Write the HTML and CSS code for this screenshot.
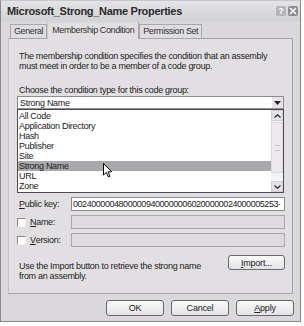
FILE: index.html
```html
<!DOCTYPE html>
<html lang="en">
<head>
    <meta charset="UTF-8">
    <title>Microsoft_Strong_Name Properties</title>
    <link rel="stylesheet" href="styles.css">
</head>
<body>
    <div class="window">
        <div class="titlebar">
            <span class="title">Microsoft_Strong_Name Properties</span>
            <div class="caption-btns">
                <span class="cap-btn">?</span>
                <span class="cap-btn close">
                    <svg width="8" height="8" viewBox="0 0 8 8"><path d="M1 1L7 7M7 1L1 7" stroke="#fff" stroke-width="1.6"/></svg>
                </span>
            </div>
        </div>

        <div class="tabs">
            <div class="tab">General</div>
            <div class="tab active">Membership Condition</div>
            <div class="tab">Permission Set</div>
        </div>

        <div class="panel">
            <p class="intro">The membership condition specifies the condition that an assembly<br>must meet in order to be a member of a code group.</p>
            <p class="choose">Choose the condition type for this code group:</p>

            <div class="combo">
                <span class="combo-text">Strong Name</span>
                <span class="combo-btn">
                    <svg width="7" height="4" viewBox="0 0 7 4"><path d="M0 0H7L3.5 4Z" fill="#222"/></svg>
                </span>
            </div>
            <div class="listbox">
                <ul class="items">
                    <li>All Code</li>
                    <li>Application Directory</li>
                    <li>Hash</li>
                    <li>Publisher</li>
                    <li>Site</li>
                    <li class="selected">Strong Name</li>
                    <li>URL</li>
                    <li>Zone</li>
                </ul>
                <div class="vscroll">
                    <span class="sb-btn">
                        <svg width="7" height="4" viewBox="0 0 7 4"><path d="M0.5 3.5L3.5 0.8L6.5 3.5" fill="none" stroke="#333" stroke-width="1.3"/></svg>
                    </span>
                    <span class="sb-track"><span class="sb-thumb"><i></i></span></span>
                    <span class="sb-btn">
                        <svg width="7" height="4" viewBox="0 0 7 4"><path d="M0.5 0.5L3.5 3.2L6.5 0.5" fill="none" stroke="#333" stroke-width="1.3"/></svg>
                    </span>
                </div>
                <svg class="cursor" width="10" height="15" viewBox="0 0 10 15"><path d="M0.5 0.5V12L3.3 9.4L5.3 14L7 13.2L5 8.8H8.8Z" fill="#fff" stroke="#000" stroke-width="1"/></svg>
            </div>

            <div class="field-row">
                <label class="field-label"><u>P</u>ublic key:</label>
                <div class="field key">002400000480000094000000060200000024000005253·</div>
            </div>
            <div class="field-row">
                <label class="field-label check"><span class="checkbox"></span><u>N</u>ame:</label>
                <div class="field disabled"></div>
            </div>
            <div class="field-row">
                <label class="field-label check"><span class="checkbox"></span><u>V</u>ersion:</label>
                <div class="field disabled"></div>
            </div>

            <div class="import-row">
                <p class="import-text">Use the Import button to retrieve the strong name<br>from an assembly.</p>
                <button class="btn import-btn"><u>I</u>mport...</button>
            </div>
        </div>

        <div class="footer">
            <button class="btn">OK</button>
            <button class="btn">Cancel</button>
            <button class="btn"><u>A</u>pply</button>
        </div>
    </div>
</body>
</html>
```

FILE: styles.css
```css
body {
    margin: 0;
    background-color: #fff;
    font-family: "Liberation Sans", Arial, sans-serif;
    font-size: 9px;
    letter-spacing: -0.3px;
    color: #1c1c1c;
}
p {
    margin: 0;
}
.window {
    width: 301px;
    height: 322px;
    box-sizing: border-box;
    border: 1px solid #8a888c;
    border-top-color: #c8c6ca;
    background-color: #dbd8dc;
}
.titlebar {
    display: flex;
    align-items: center;
    justify-content: space-between;
    height: 20px;
    padding: 0 2px 0 6px;
    background: linear-gradient(#e4e3e5, #d2d1d3);
}
.title {
    font-weight: bold;
    font-size: 11px;
    letter-spacing: -0.3px;
    color: #2a2a2a;
}
.caption-btns {
    display: flex;
    gap: 2px;
}
.cap-btn {
    display: flex;
    align-items: center;
    justify-content: center;
    width: 10px;
    height: 10px;
    border-radius: 2px;
    background-color: #b5b3b7;
    color: #fff;
    font-weight: bold;
    font-size: 9px;
    letter-spacing: 0;
}
.cap-btn.close {
    background-color: #8d8b90;
}
.tabs {
    display: flex;
    align-items: flex-end;
    height: 17px;
    padding-left: 9px;
}
.tab {
    height: 13px;
    padding: 0 3px;
    border: 1px solid #a9a7ab;
    border-bottom: none;
    background-color: #e0dde1;
    line-height: 13px;
    letter-spacing: -0.4px;
    color: #333;
}
.tab.active {
    height: 16px;
    line-height: 14px;
    margin-bottom: -1px;
    border-top: 2px solid #d8d5d9;
    border-left-color: #c9c7cb;
    border-right-color: #a9a7ab;
    background-color: #e2dfe3;
    padding: 0 4px;
}
.panel {
    height: 256px;
    margin: 0 7px;
    box-sizing: border-box;
    border: 1px solid #a6a4a8;
    border-left-color: #c4c2c6;
    background-color: #e2dfe3;
    padding: 12px 8px 0 8px;
}
.intro {
    padding-left: 2px;
    line-height: 10px;
}
.choose {
    padding-left: 2px;
    margin-top: 14px;
    line-height: 10px;
}
.combo {
    display: flex;
    align-items: center;
    height: 13px;
    margin-top: 1px;
    box-sizing: border-box;
    border: 1px solid #8e8c90;
    background-color: #fff;
    padding-left: 2px;
}
.combo-text {
    flex: 1;
}
.combo-btn {
    display: flex;
    align-items: center;
    justify-content: center;
    width: 11px;
    height: 11px;
    background-color: #e6e4e7;
}
.listbox {
    position: relative;
    display: flex;
    height: 84px;
    box-sizing: border-box;
    border: 1px solid #4c4a4e;
    background-color: #fff;
}
.items {
    flex: 1;
    margin: 0;
    padding: 1px 0 0;
    list-style: none;
}
.items li {
    height: 10px;
    line-height: 10px;
    padding-left: 1px;
}
.items li.selected {
    background-color: #a9a8ab;
}
.vscroll {
    display: flex;
    flex-direction: column;
    width: 12px;
    background-color: #f3f2f4;
}
.sb-btn {
    display: flex;
    align-items: center;
    justify-content: center;
    height: 11px;
    background-color: #e5e3e6;
    border: 1px solid #d2d0d4;
    box-sizing: border-box;
}
.sb-track {
    flex: 1;
    display: flex;
    flex-direction: column;
    padding-top: 1px;
}
.sb-thumb {
    height: 49px;
    display: flex;
    align-items: center;
    justify-content: center;
    border: 1px solid #dcdade;
    background-color: #eceaed;
}
.sb-thumb i {
    width: 5px;
    height: 4px;
    border-top: 1px solid #c6c4c8;
    border-bottom: 1px solid #c6c4c8;
}
.cursor {
    position: absolute;
    left: 85px;
    top: 53px;
}
.field-row {
    display: flex;
    align-items: center;
    height: 14px;
    margin-top: 4px;
}
.field-label {
    display: flex;
    align-items: center;
    width: 52px;
    padding-left: 2px;
}
.field-label.check {
    width: 54px;
    padding-left: 0;
}
.checkbox {
    width: 7px;
    height: 7px;
    margin-right: 4px;
    border: 1px solid #8a888c;
    border-right-color: #f4f4f4;
    border-bottom-color: #f4f4f4;
    background-color: #fff;
}
.field {
    flex: 1;
    height: 14px;
    margin-right: -1px;
    box-sizing: border-box;
    border: 1px solid #8e8c90;
    background-color: #fff;
    padding-left: 1px;
    line-height: 12px;
    overflow: hidden;
    white-space: nowrap;
}
.field.key {
    letter-spacing: -0.45px;
}
.field.disabled {
    background-color: #dedbdf;
    border-color: #a9a7ab;
}
.import-row {
    display: flex;
    justify-content: space-between;
    align-items: flex-start;
    margin-top: 8px;
}
.import-text {
    padding-left: 2px;
    margin-top: 6px;
    line-height: 10px;
}
.btn {
    height: 15px;
    box-sizing: border-box;
    border: 1px solid #6a686c;
    border-radius: 3px;
    background: linear-gradient(#fbfbfb, #e4e2e5);
    font-family: inherit;
    font-size: 9px;
    letter-spacing: -0.2px;
    color: #222;
    padding: 0;
}
.import-btn {
    width: 57px;
    margin-right: -1px;
}
.footer {
    display: flex;
    justify-content: flex-end;
    gap: 7px;
    padding: 6px 6px 0 0;
}
.footer .btn {
    width: 58px;
    height: 16px;
}
```
